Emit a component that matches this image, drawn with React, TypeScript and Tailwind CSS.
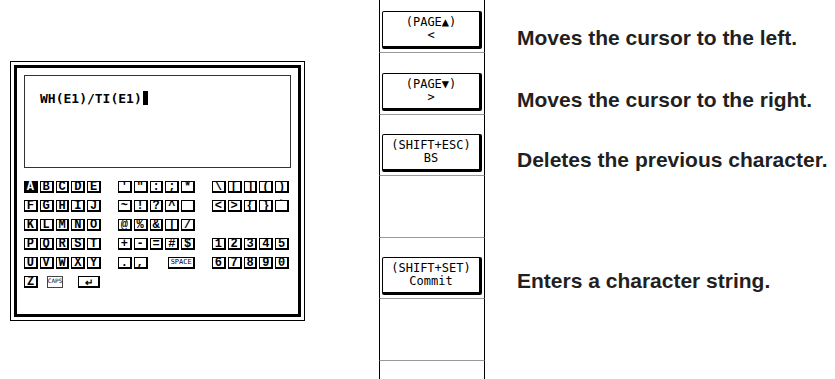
import clsx from 'clsx';

type KeyDef = { label?: string; span?: number; active?: boolean; tiny?: boolean; empty?: boolean };

const rows: KeyDef[][][] = [
  [
    [{ label: 'A', active: true }, { label: 'B' }, { label: 'C' }, { label: 'D' }, { label: 'E' }],
    [{ label: "'" }, { label: '"' }, { label: ':' }, { label: ';' }, { label: '*' }],
    [{ label: '\\' }, { label: '[' }, { label: ']' }, { label: '(' }, { label: ')' }],
  ],
  [
    [{ label: 'F' }, { label: 'G' }, { label: 'H' }, { label: 'I' }, { label: 'J' }],
    [{ label: '~' }, { label: '!' }, { label: '?' }, { label: '^' }, { label: '_' }],
    [{ label: '<' }, { label: '>' }, { label: '{' }, { label: '}' }, { label: '`' }],
  ],
  [
    [{ label: 'K' }, { label: 'L' }, { label: 'M' }, { label: 'N' }, { label: 'O' }],
    [{ label: '@' }, { label: '%' }, { label: '&' }, { label: '|' }, { label: '/' }],
    [],
  ],
  [
    [{ label: 'P' }, { label: 'Q' }, { label: 'R' }, { label: 'S' }, { label: 'T' }],
    [{ label: '+' }, { label: '-' }, { label: '=' }, { label: '#' }, { label: '$' }],
    [{ label: '1' }, { label: '2' }, { label: '3' }, { label: '4' }, { label: '5' }],
  ],
  [
    [{ label: 'U' }, { label: 'V' }, { label: 'W' }, { label: 'X' }, { label: 'Y' }],
    [{ label: '.' }, { label: ',' }, { empty: true }, { label: 'SPACE', span: 2, tiny: true }],
    [{ label: '6' }, { label: '7' }, { label: '8' }, { label: '9' }, { label: '0' }],
  ],
];

function Key({ k }: { k: KeyDef }) {
  if (k.empty) return <div />;
  return (
    <div
      className={clsx(
        'flex h-[12px] items-center justify-center border-t border-l border-r-2 border-b-2 border-black leading-none font-bold',
        k.span === 2 && 'col-span-2 ml-[3px]',
        k.tiny ? "text-[7px] font-['DejaVu_Sans_Mono',monospace] font-normal" : "text-[12px] font-['Liberation_Mono',monospace]",
        k.active ? 'bg-black text-white' : 'bg-white text-black'
      )}
    >
      {k.label}
    </div>
  );
}

function Keyboard() {
  return (
    <div className="mt-[13px] flex flex-col gap-[7px]">
      {rows.map((row, i) => (
        <div key={i} className="flex gap-[17px]">
          {row.map((group, j) => (
            <div key={j} className="grid w-[77px] grid-cols-5 gap-x-[2px]">
              {group.map((k, n) => (
                <Key key={n} k={k} />
              ))}
            </div>
          ))}
        </div>
      ))}
      <div className="flex items-center">
        <div className="flex h-[12px] w-[14px] items-center justify-center border-t border-l border-r-2 border-b-2 border-black font-['Liberation_Mono',monospace] text-[12px] font-bold leading-none">
          Z
        </div>
        <div className="ml-[9px] flex h-[12px] w-[16px] items-start justify-center border border-[#444] pt-px font-['DejaVu_Sans_Mono',monospace] text-[6px] leading-none">
          CAPS
        </div>
        <div className="ml-[15px] flex h-[12px] w-[22px] items-center justify-center border-t border-l border-r-2 border-b-2 border-black text-[10px] font-bold leading-none">
          ↵
        </div>
      </div>
    </div>
  );
}

function Panel() {
  return (
    <div className="h-[260px] w-[295px] border border-black p-[3px]">
      <div className="h-full border-[3px] border-black px-[7px] pt-[7px]">
        <div className="flex h-[93px] items-start border border-[#333] pl-[15px] pt-[16px] font-['DejaVu_Sans_Mono',monospace] text-[13px] font-bold leading-none text-black">
          <span>WH(E1)/TI(E1)</span>
          <span className="ml-px h-[14px] w-[5px] -translate-y-[1px] bg-black" />
        </div>
        <Keyboard />
      </div>
    </div>
  );
}

const softkeys = [
  { top: '(PAGE▲)', bottom: '<', text: 'Moves the cursor to the left.', h: 'h-[53px]', shift: 'translate-y-[7px]' },
  { top: '(PAGE▼)', bottom: '>', text: 'Moves the cursor to the right.', h: 'h-[62px]', shift: 'translate-y-[7px]' },
  { top: '(SHIFT+ESC)', bottom: 'BS', text: 'Deletes the previous character.', h: 'h-[61px]', shift: 'translate-y-[6px]' },
  { h: 'h-[62px]' },
  { top: '(SHIFT+SET)', bottom: 'Commit', text: 'Enters a character string.', h: 'h-[61px]', shift: 'translate-y-[4px]' },
  { h: 'h-[62px]' },
];

export default function App() {
  return (
    <div className="flex h-[379px] w-[835px] items-start overflow-hidden bg-white">
      <div className="pl-[10px] pt-[61px]">
        <Panel />
      </div>
      <div className="ml-[74px] flex flex-col">
        {softkeys.map((s, i) => (
          <div key={i} className={clsx('flex items-end', s.h)}>
            <div className="flex h-full w-[106px] items-end border-x border-b border-x-black border-b-[#999] px-[2px] pb-[3px]">
              {s.top && (
                <div className="flex h-[38px] w-full flex-col items-center justify-center rounded-[2px] border-t border-l border-r-[3px] border-b-[3px] border-black font-['DejaVu_Sans_Mono',monospace] text-[12px] leading-[13px] text-black">
                  <span>{s.top}</span>
                  <span>{s.bottom}</span>
                </div>
              )}
            </div>
            {s.text && (
              <div
                className={clsx(
                  "mb-[3px] flex h-[38px] items-center whitespace-nowrap pl-[32px] font-['Liberation_Sans',Arial,sans-serif] text-[21px] font-bold text-[#231f20]",
                  s.shift
                )}
              >
                {s.text}
              </div>
            )}
          </div>
        ))}
        <div className="h-[40px] w-[106px] border-x border-black" />
      </div>
    </div>
  );
}
